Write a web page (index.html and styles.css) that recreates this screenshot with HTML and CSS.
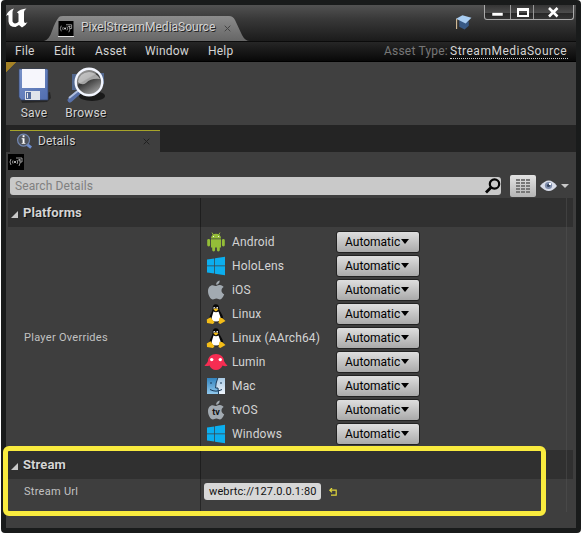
FILE: index.html
```html
<!DOCTYPE html>
<html lang="en">
<head>
<meta charset="utf-8">
<title>PixelStreamMediaSource</title>
<link rel="stylesheet" href="styles.css">
</head>
<body>
<svg class="defs" aria-hidden="true">
  <defs>
    <linearGradient id="lens" x1="0" y1="0" x2=".6" y2="1"><stop offset="0" stop-color="#aaa"/><stop offset=".45" stop-color="#777"/><stop offset=".5" stop-color="#333"/><stop offset="1" stop-color="#999"/></linearGradient>
    <linearGradient id="disk" x1="0" y1="0" x2="1" y2="1"><stop offset="0" stop-color="#7891c8"/><stop offset="1" stop-color="#506db0"/></linearGradient>
    <linearGradient id="face" x1="0" y1="0" x2="0" y2="1"><stop offset="0" stop-color="#3283bd"/><stop offset="1" stop-color="#90c8ed"/></linearGradient>
    <linearGradient id="face2" x1="0" y1="0" x2="0" y2="1"><stop offset="0" stop-color="#a9cbe6"/><stop offset="1" stop-color="#eef4fb"/></linearGradient>
    <symbol id="media" viewBox="0 0 16 16"><path fill="#000" d="M0 0h16v16H0z"/><path fill="none" stroke="#bbb" stroke-width=".8" d="M3 5q-2 3 0 6M5 6.500q-1 1.500 0 3M9 6q1.500 2 0 4M8 4h6v4h-2M11.500 5q1.500 4-.5 7M10 6h3"/><circle cx="7" cy="8" r="1" fill="#ddd"/></symbol>
    <symbol id="android" viewBox="0 0 20 20"><g fill="#94bd38"><path d="M5 6.500a5 4.800 0 0 1 10 0zM5 7.300h10v8.200H5z"/><rect x="1.200" y="7" width="2.900" height="7.500" rx="1.400"/><rect x="15.900" y="7" width="2.900" height="7.500" rx="1.400"/><rect x="6.200" y="13" width="2.900" height="6.500" rx="1.400"/><rect x="10.900" y="13" width="2.900" height="6.500" rx="1.400"/></g><path stroke="#94bd38" d="m6 .6 1.500 2.500M14 .6l-1.500 2.500"/><path fill="#eee" d="M7 4h1v1H7zM12 4h1v1h-1z"/></symbol>
    <symbol id="windows" viewBox="0 0 20 20"><path fill="#0caeee" d="m1 3.400 7.300-1v7.100H1zM9 2.300 19 .8v8.700H9zM1 10.300h7.300v7.100l-7.300-1zM9 10.300h10v8.900l-10-1.500z"/></symbol>
    <symbol id="apple" viewBox="0 0 20 20"><path fill="#a2aab1" d="M13.700.5c.2 2.500-1.600 4.200-3.600 4.300C9.900 2.500 11.700.8 13.700.5zM10.200 6C11.500 5.500 12.500 5 14 5.100c1.600.1 2.900.9 3.600 2-3.200 2-2.500 6 .6 7.200-1 2.700-2.500 5.100-4.200 5.100-1.400 0-1.900-.8-3.600-.8s-2.200.8-3.500.8C4.500 19.400 2 15.100 2 11.200c0-3.800 2.200-6 4.600-6 1.500 0 2.500.8 3.600.8z"/></symbol>
    <symbol id="linux" viewBox="0 0 20 20"><path fill="#080808" d="M6.600 5C6.400 1.700 7.600.2 9.700.2c2.600 0 3.600 1.900 3.500 4.800.2 2.700 4 5.300 4 9.700 0 3-3.200 3.500-7.200 3.500-4.200 0-6.500-1-6.500-3.500C3.500 10.500 6.500 8.200 6.600 5z"/><path fill="#fff" d="M7.500 7.500q2.500 1.500 5 0l1.700 4.700c1.200 3.300-.4 5.300-4.200 5.300s-5-2-4-5z"/><path fill="#fff" d="M7.600 3h1.500v2H7.600zM10.500 3H12v2h-1.500z"/><path fill="#f4bd18" d="m7.300 5.600 2.500-1.300 2.800 1.300-2.700 2zM.8 15.500l3.700-2.300 4 5-1.500 1.700-6-1zM13.400 13.700l2.700.3 3.400 2.900-5.200 3-1.900-1z"/><path fill="#111" d="M8.200 3.800h.7v1h-.7zM10.800 3.800h.7v1h-.7z"/></symbol>
    <symbol id="lumin" viewBox="0 0 24 20"><path fill="#f62d52" d="M4 9C4 5 7.500 2 12 2s8 3 8 7c.8 1.700 2 3.200 3.600 4.700-2 .7-3.600.5-5-.3C17.500 16 15 18 12 18s-5.500-2-6.600-4.600c-1.400.8-3 .9-5 .3C2.100 12.200 3.300 10.700 4 9z"/><circle cx="7.700" cy="7.600" r="1.700" fill="#fff"/><circle cx="16.300" cy="7.600" r="1.700" fill="#fff"/></symbol>
    <symbol id="mac" viewBox="0 0 20 20"><path fill="url(#face)" d="M1 2h18v16H1z"/><path fill="url(#face2)" d="M11.500 2H19v16h-6.500l-.6-6H9.500q0-5 2-10z"/><path fill="none" stroke="#173858" d="M11.800 2q-2.200 5-2.200 10H12l.6 6M5 6v2M15 6v2M4 13.500q6 3.300 12 0"/></symbol>
  </defs>
</svg>
<div class="window">
  <header class="titlebar">
    <svg class="logo" viewBox="0 0 22 20"><path fill="#fff" d="M0 8Q2 2 8 .5 6.500 2 6.500 4v9.500q1 2 2.500 2 2-.3 3.500-1.700V6q0-1.500-1.700-1.500Q14 1 20.500.5 18 2 18 4v9q0 2 1.300 2 1 0 2.200-1-1.500 3.500-5.500 5.500L13 17l-3.500 2Q3 19 2.500 13.500V8Q2.500 6 0 8z"/></svg>
    <div class="doc-tab">
      <svg class="tab-shape" viewBox="0 0 206 25" preserveAspectRatio="none"><defs><linearGradient id="tg" x1="0" y1="0" x2="0" y2="1"><stop offset="0" stop-color="#8c8c8c"/><stop offset="1" stop-color="#666"/></linearGradient></defs><path fill="url(#tg)" d="M0 25Q5 24 8 15T15 1q1-1 4-1h166q4 0 6 4l7 15q3 6 8 6z"/></svg>
      <svg class="media-icon"><use href="#media"/></svg>
      <span class="doc-title">PixelStreamMediaSource</span>
      <svg class="close" viewBox="0 0 7 7"><path stroke="#444" d="m.7.7 5.600 5.600M6.300.7.7 6.300"/></svg>
    </div>
    <svg class="cap" viewBox="0 0 16 16"><path fill="#385985" d="m4 6 9 1v4l-4 3.500L4 12z"/><path fill="#a9cdf2" d="m1 4.500 6-3.300 8.500 2.300L10 9z"/><path fill="none" stroke="#dac29c" d="M1.500 4.500V14"/></svg>
    <div class="controls">
      <div class="ctl min"><svg viewBox="0 0 13 12"><path fill="#fff" stroke="#222" stroke-width=".5" d="M1 6.500h11v3.500H1z"/></svg></div>
      <div class="ctl max"><svg viewBox="0 0 13 12"><path fill="none" stroke="#fff" stroke-width="2" d="M2 3.500h10V10H2z"/><path fill="#fff" d="M1 2h12v3H1z"/></svg></div>
      <div class="ctl cls"><svg viewBox="0 0 13 12"><path stroke="#fff" stroke-width="2.600" d="m2 2 8.500 8.500m0-8.500L2 10.500"/></svg></div>
    </div>
  </header>
  <nav class="menu">
    <span class="m-file">File</span><span class="m-edit">Edit</span><span class="m-asset">Asset</span><span class="m-window">Window</span><span class="m-help">Help</span>
    <span class="asset-type">Asset Type:</span><span class="asset-link">StreamMediaSource</span>
  </nav>
  <div class="toolbar">
    <div class="tool save">
      <svg viewBox="0 0 36 38"><path fill="#1c1c1c" opacity=".7" d="m5 34 29-8 1 6-4 4-25 1z"/><path fill="url(#disk)" stroke="#35466f" stroke-width=".7" d="M3 3h28l1 1v30H5l-2-3z"/><path fill="#f6f6fc" d="M6 3h23v19H6z"/><path fill="#dfe3ea" d="M9 25h15v9H9z"/><path fill="#526b9d" d="M10 26h5v7h-5z"/><path fill="#e7e7eb" d="M11 27h1v5h-1z"/></svg>
      <span>Save</span>
    </div>
    <div class="tool browse">
      <svg viewBox="0 0 42 38"><ellipse cx="27" cy="30" rx="13" ry="5" fill="#191919"/><path fill="#52678e" d="M7 8h9v16H7zM32 7h7v11h-7z"/><path stroke="#5870a7" stroke-width="5" stroke-linecap="round" d="m5 34 10-9"/><path stroke="#b0bfdf" stroke-width="2" d="m4 32 10-8"/><circle cx="24" cy="16" r="13.300" fill="url(#lens)" stroke="#f3f6ff" stroke-width="2.400"/><path fill="#ddd" opacity=".65" d="M13 16q1-9 11-10 7 0 11 7-9-1-14 4-4 3-8-1z"/></svg>
      <span>Browse</span>
    </div>
  </div>
  <div class="panel-tabs">
    <div class="details-tab">
      <svg class="info" viewBox="0 0 18 17"><path stroke="#6f8fcf" stroke-width="3" d="m11 11 5 4"/><circle cx="8" cy="7" r="6.300" fill="#4e535b" stroke="#7186b0" stroke-width="1.300"/><path fill="#fff" d="M7 2h2v2H7zM6 5h3v5h1v1H6v-1h1V6H6z"/></svg>
      <span>Details</span>
      <svg class="close" viewBox="0 0 7 7"><path stroke="#202020" d="m.7.7 5.600 5.600M6.300.7.7 6.300"/></svg>
    </div>
  </div>
  <main class="panel">
    <svg class="media-icon object"><use href="#media"/></svg>
    <div class="search-row">
      <div class="search"><span>Search Details</span><svg viewBox="0 0 16 16"><circle cx="9.500" cy="6" r="4.700" fill="none" stroke="#050505" stroke-width="2.200"/><path stroke="#050505" stroke-width="2.800" d="m1 14.500 5-5"/></svg></div>
      <div class="grid-btn"><svg viewBox="0 0 14 14"><path stroke="#777" stroke-width="2" stroke-dasharray="4 1" d="M0 1h14M0 4h14M0 7h14M0 10h14M0 13h14"/></svg></div>
      <svg class="eye" viewBox="0 0 29 12"><path fill="#d8dce9" d="M0 6q9-11 17 0-8 10-17 0z"/><circle cx="8.500" cy="5.500" r="3.600" fill="#7d8baa"/><circle cx="8.500" cy="5.500" r="1.600" fill="#35435c"/><path fill="#fff" d="M9 3h2v2H9z"/><path fill="#c8c8c8" d="M21 4h8l-4 4z"/></svg>
    </div>
    <div class="props">
      <section class="group">
        <h2><svg viewBox="0 0 7 7"><path fill="#c9c9c9" d="M0 7h7V0z"/></svg>Platforms</h2>
        <div class="row overrides">
          <div class="label">Player Overrides</div>
          <div class="list">
            <div class="item"><svg><use href="#android"/></svg><span>Android</span><button>Automatic<i></i></button></div>
            <div class="item"><svg><use href="#windows"/></svg><span>HoloLens</span><button>Automatic<i></i></button></div>
            <div class="item"><svg><use href="#apple"/></svg><span>iOS</span><button>Automatic<i></i></button></div>
            <div class="item"><svg><use href="#linux"/></svg><span>Linux</span><button>Automatic<i></i></button></div>
            <div class="item"><svg><use href="#linux"/></svg><span>Linux (AArch64)</span><button>Automatic<i></i></button></div>
            <div class="item"><svg class="wide"><use href="#lumin"/></svg><span>Lumin</span><button>Automatic<i></i></button></div>
            <div class="item"><svg><use href="#mac"/></svg><span>Mac</span><button>Automatic<i></i></button></div>
            <div class="item"><svg viewBox="0 0 20 20"><use href="#apple"/><text x="10" y="15" class="tv">tv</text></svg><span>tvOS</span><button>Automatic<i></i></button></div>
            <div class="item"><svg><use href="#windows"/></svg><span>Windows</span><button>Automatic<i></i></button></div>
          </div>
        </div>
      </section>
      <section class="group stream">
        <h2><svg viewBox="0 0 7 7"><path fill="#c9c9c9" d="M0 7h7V0z"/></svg>Stream</h2>
        <div class="row url">
          <div class="label">Stream Url</div>
          <div class="value"><span class="input">webrtc://127.0.0.1:80</span><svg viewBox="0 0 8 8"><path fill="none" stroke="#e2d83b" stroke-width="1.200" d="M3 0 .8 2.200 3 4.400M1 2.200h6.200v5H2"/></svg></div>
        </div>
      </section>
    </div>
  </main>
  <div class="highlight"></div>
</div>
</body>
</html>
```
FILE: styles.css
```css
* { box-sizing: border-box; }
body { margin: 0; background: #fff; font: 12px/16px Roboto, "Liberation Sans", sans-serif; color: #d4d4d4; overflow: hidden; }
svg { display: block; flex: none; }
.defs { position: absolute; width: 0; height: 0; }
.window { position: relative; width: 580px; height: 533px; margin-left: 1px; border: 5px solid #191b1b; border-radius: 4px; background: #3e3e3e; display: flex; flex-direction: column; }
.titlebar { height: 36px; flex: none; display: flex; align-items: flex-start; background: linear-gradient(#525252, #383838 40%, #1b1b1b); }
.logo { width: 22px; height: 20px; margin: 3px 1px 0 0; }
.doc-tab { position: relative; width: 206px; height: 25px; margin: 11px 0 0 15px; display: flex; align-items: center; }
.tab-shape { position: absolute; inset: 0; width: 206px; height: 25px; z-index: 0; }
.media-icon { position: relative; width: 16px; height: 16px; border-bottom: 1px solid #ddd; }
.doc-tab .media-icon { margin-left: 14px; }
.doc-title { position: relative; width: 143px; margin: -3px 0 0 7px; text-shadow: 1px 1px #222; white-space: nowrap; }
.close { position: relative; width: 7px; height: 7px; }
.cap { width: 17px; height: 17px; margin: 9px 0 0 205px; }
.controls { display: flex; margin-left: 12px; width: 90px; height: 15px; border: 1px solid #aaa; border-top: 0; border-radius: 0 0 3px 3px; overflow: hidden; background: linear-gradient(#343434, #4c4c4c 55%, #262626 56%, #333); }
.ctl { display: flex; justify-content: center; align-items: center; }
.ctl + .ctl { border-left: 1px solid #999; }
.ctl svg { width: 13px; height: 12px; }
.min { width: 25px; } .max { width: 23px; } .cls { flex: 1; }
.menu { height: 21px; flex: none; display: flex; align-items: center; padding: 0 8px 1px 9px; background: linear-gradient(#262626, #080808); border-top: 1px solid #0b0b0b; border-bottom: 1px solid #000; letter-spacing: .2px; }
.m-file { width: 39px; } .m-edit { width: 41px; } .m-asset { width: 50px; } .m-window { width: 63px; }
.asset-type { margin-left: auto; color: #777; width: 66px; white-space: nowrap; }
.asset-link { width: 118px; height: 16px; border-bottom: 1px dotted #ccc; white-space: nowrap; letter-spacing: .5px; }
.toolbar { height: 63px; flex: none; display: flex; background: linear-gradient(135deg, #a58226 0 7px, transparent 7.500px), #404040; }
.tool { display: flex; flex-direction: column; text-align: center; text-shadow: 1px 1px #151515; letter-spacing: .25px; }
.save { width: 56px; } .browse { width: 48px; }
.tool svg { margin: 4px auto 0; }
.save svg { width: 36px; height: 38px; } .browse svg { width: 42px; height: 38px; }
.tool span { margin-top: 1px; }
.panel-tabs { height: 27px; flex: none; background: #242424; padding: 5px 0 0 4px; }
.details-tab { width: 150px; height: 22px; display: flex; align-items: center; background: #3e3e3e; border-top: 1px solid #a7a42a; text-shadow: 1px 1px #111; }
.info { width: 17px; height: 17px; margin-left: 6px; }
.details-tab span { width: 105px; margin: -1px 0 0 5px; letter-spacing: .1px; }
.panel { flex: 1; background: #3e3e3e; min-height: 0; }
.object { margin: 2px 0 0 2px; border: 0; }
.search-row { display: flex; height: 29px; margin-top: 5px; align-items: flex-start; }
.search { width: 491px; height: 18px; margin: 2px 0 0 4px; border-radius: 3px; background: #c9c9c9; display: flex; align-items: center; justify-content: space-between; padding: 0 0 0 5px; color: #808080; letter-spacing: .1px; }
.search svg { width: 16px; height: 16px; }
.grid-btn { width: 26px; height: 22px; margin-left: 9px; border-radius: 2px; background: linear-gradient(#e3e3e3, #b4b4b4); display: grid; place-items: center; }
.grid-btn svg { width: 14px; height: 14px; }
.eye { width: 29px; height: 12px; margin: 5px 0 0 4px; }
.props { margin: -6px 3px 0 2px; height: 330px; }
.group h2 { height: 29px; margin: 0; padding-left: 3px; display: flex; align-items: center; font-size: 13px; line-height: 16px; font-weight: 700; letter-spacing: .1px; background: linear-gradient(90deg, transparent 192px, #1e1e1e 192px 193px, transparent 193px 558px, #404040 558px 559px, transparent 559px), #303030; text-shadow: 1px 1px #111; }
.group h2 svg { width: 7px; height: 7px; margin: 3px 5px 0 0; }
.row { display: flex; background: linear-gradient(90deg, transparent 192px, #262626 192px 193px, transparent 193px 558px, #484848 558px 559px, transparent 559px); }
.overrides { height: 223px; }
.label { width: 193px; padding-left: 16px; align-self: center; font-size: 11px; color: #c2c2c2; letter-spacing: .28px; }
.overrides .label { margin-top: -2px; }
.list { padding-top: 3px; }
.item { display: flex; height: 24px; align-items: center; }
.item > svg { width: 20px; height: 20px; margin-left: 5px; }
.item > svg.wide { width: 24px; margin: 0 -2px 0 3px; }
.item > span { width: 104px; margin-left: 6px; letter-spacing: .15px; }
button { width: 84px; height: 22px; margin-top: -1px; padding: 0 0 0 8px; border: 1px solid #222; border-radius: 3px; background: linear-gradient(#dedede, #aaa); display: flex; align-items: center; color: #000; font: inherit; letter-spacing: 0; }
button i { border: 4px solid transparent; border-top: 5px solid #000; border-bottom: 0; margin-left: 1px; }
.tv { font: 700 9px Roboto, sans-serif; text-anchor: middle; fill: #111; }
.url { height: 33px; padding-bottom: 8px; }
.value { display: flex; align-items: center; padding-left: 3px; }
.input { width: 117px; height: 17px; padding-left: 5px; border-radius: 3px; background: #d7d7d7; color: #111; font-size: 11px; line-height: 17px; letter-spacing: .12px; white-space: nowrap; }
.value svg { width: 8px; height: 8px; margin-left: 8px; }
.highlight { position: absolute; left: -3px; top: 441px; width: 543px; height: 70px; border: 5px solid #f9eb3e; border-radius: 6px; }
```
